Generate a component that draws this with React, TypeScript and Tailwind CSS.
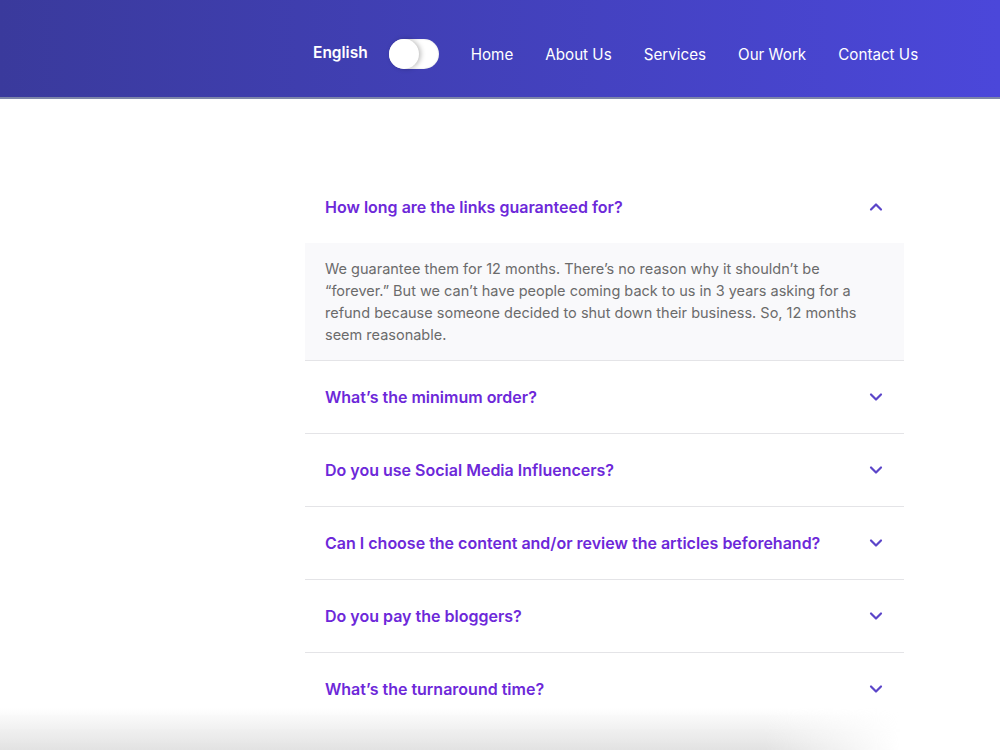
import { useState } from 'react'

const faqs = [
  {
    q: "How long are the links guaranteed for?",
    a: "We guarantee them for 12 months. There’s no reason why it shouldn’t be “forever.” But we can’t have people coming back to us in 3 years asking for a refund because someone decided to shut down their business. So, 12 months seem reasonable."
  },
  { q: "What’s the minimum order?", a: "" },
  { q: "Do you use Social Media Influencers?", a: "" },
  { q: "Can I choose the content and/or review the articles beforehand?", a: "" },
  { q: "Do you pay the bloggers?", a: "" },
  { q: "What’s the turnaround time?", a: "" }
]

const links = ["Home", "About Us", "Services", "Our Work", "Contact Us"]

function Chevron({ up }: { up: boolean }) {
  return (
    <svg width="16" height="16" viewBox="0 0 16 16" fill="none" className="text-[#5b45c9]">
      <path
        d={up ? "M3 10.5 8 5.5l5 5" : "M3 5.5l5 5 5-5"}
        stroke="currentColor"
        strokeWidth="2.2"
        strokeLinecap="round"
        strokeLinejoin="round"
      />
    </svg>
  )
}

export default function App() {
  const [open, setOpen] = useState(0)
  const [on, setOn] = useState(false)

  return (
    <div className="relative min-h-screen h-[750px] overflow-hidden bg-white font-['Inter','Noto_Sans',sans-serif]">

      {/* Header */}
      <header className="h-[99px] pt-[14px] bg-gradient-to-r from-[#3a3a9c] to-[#4b47da] border-b-2 border-[#7d86a8] flex items-center">
        <div className="ml-[313px] flex items-center">
          <span className="relative -top-[3px] text-white text-[15.5px] font-semibold">English</span>
          <button
            onClick={() => setOn(!on)}
            className="relative -top-[2px] ml-[21px] w-[50px] h-[30px] rounded-full bg-white shadow-[inset_0_0_2px_rgba(0,0,0,0.15)]"
          >
            <span
              className={`absolute top-0 left-0 w-[30px] h-[30px] rounded-full bg-white shadow-[2px_0_5px_rgba(0,0,0,0.25)] ${on ? 'translate-x-[20px]' : ''}`}
            />
          </button>
          <nav className="ml-[32px] flex items-center gap-[32px]">
            {links.map((l) => (
              <a key={l} className="text-white text-[15.2px] cursor-pointer">{l}</a>
            ))}
          </nav>
        </div>
      </header>

      {/* FAQ */}
      <main className="pt-[72px]">
        <div className="ml-[305px] w-[599px]">
          {faqs.map((f, i) => (
            <div key={i} className={i === open ? '' : 'border-t border-[#e4e4e7]'}>
              <button
                onClick={() => setOpen(open === i ? -1 : i)}
                className="w-full h-[72px] flex items-center justify-between pl-5 pr-[20px] text-left"
              >
                <span className="text-[#6d28d9] text-[16px] font-semibold">{f.q}</span>
                <Chevron up={i === open} />
              </button>
              {i === open && (
                <div className="bg-[#f9f9fb] pt-[15px] pb-[14px] pl-5 pr-10 text-[14.5px] leading-[22px] text-[#6b6b6b]">
                  {f.a || "Please contact us for details."}
                </div>
              )}
            </div>
          ))}
        </div>
      </main>

      {/* bottom window shadow */}
      <div className="pointer-events-none absolute bottom-0 left-0 w-[900px] h-[42px] bg-[linear-gradient(to_bottom,rgba(255,255,255,0),#e2e2e2)] [mask-image:linear-gradient(to_right,black_85%,transparent)]" />
    </div>
  )
}
